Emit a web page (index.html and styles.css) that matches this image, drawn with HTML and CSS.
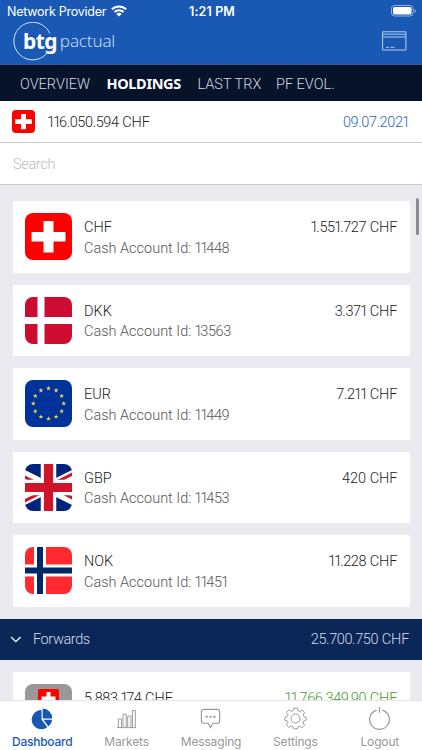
FILE: index.html
```html
<!DOCTYPE html>
<html lang="en">
<head>
<meta charset="utf-8">
<title>Holdings</title>
<link rel="stylesheet" href="styles.css">
</head>
<body>
<svg width="0" height="0" class="defs">
  <defs>
    <clipPath id="round"><rect width="47" height="47" rx="8"/></clipPath>
    <path id="star" fill="#f2d14b" d="M0-2.500 .65-.8 2.400-.78 1 .32 1.500 2 0 1-1.500 2-1 .32-2.400-.78-.65-.8Z"/>
    <symbol id="swiss" viewBox="0 0 47 47"><rect width="47" height="47" rx="8" fill="#f00"/><path fill="#fff" d="M18.500 8h10v11h12v9.500h-12v11h-10v-11h-12v-9.500h12z"/></symbol>
  </defs>
</svg>
<div class="app">
  <header class="header">
    <div class="status">
      <div class="carrier"><span class="carrier-name">Network Provider</span>
        <svg width="16" height="12" viewBox="0 0 16 12" fill="none" stroke="#fff" stroke-width="2.100"><path d="M.9 4.300a10.300 10.300 0 0 1 14.200 0M3.400 7.100a6.600 6.600 0 0 1 9.200 0"/><path fill="#fff" stroke="none" d="M5.300 8.900a4 4 0 0 1 5.400 0L8 11.600z"/></svg>
      </div>
      <span class="clock">1:21 PM</span>
      <svg class="battery" width="26" height="12" viewBox="0 0 26 12"><rect x=".5" y=".5" width="21.500" height="10.500" rx="3" fill="none" stroke="#91b1df"/><rect x="2" y="2" width="18.500" height="7.500" rx="1.600" fill="#fff"/><path d="M23.500 4v4q1.300-.6 1.300-2t-1.300-2" fill="#91b1df"/></svg>
    </div>
    <div class="brand">
      <div class="logo">
        <svg class="ring" width="40" height="39" viewBox="0 0 40 39" fill="none" stroke="#d5e2f5" stroke-width="1"><path d="M37.900 11.500A18.800 18.800 0 1 0 36 30"/></svg>
        <span class="logo-bold">btg</span><span class="logo-thin">pactual</span>
      </div>
      <svg class="card-icon" width="25" height="20" viewBox="0 0 25 20" fill="none" stroke="#b9cdea"><path d="M.6.8h23.300v18.200H.600zM.600 3.200h23.300M.600 6h23.300M4 16.300h3M8.500 16.300h4"/></svg>
    </div>
  </header>
  <nav class="nav"><span class="n1">OVERVIEW</span><b class="n2">HOLDINGS</b><span class="n3">LAST TRX</span><span class="n4">PF EVOL.</span></nav>
  <div class="summary"><svg width="23" height="23"><use href="#swiss"/></svg><span class="total"><span class="num"><i>11</i>6.050.594</span> CHF</span><span class="date num">09.07.202<i>1</i></span></div>
  <div class="search">Search</div>
  <main class="list">
    <div class="scrollbar"></div>
    <article class="card"><svg class="flag" viewBox="0 0 47 47"><use href="#swiss"/></svg>
      <div class="info"><div class="line"><span>CHF</span><span><span class="num"><i>1</i>.55<i>1</i>.727</span> CHF</span></div><div class="sub">Cash Account Id: <span class="num"><i>11</i>448</span></div></div></article>
    <article class="card"><svg class="flag" viewBox="0 0 47 47"><g clip-path="url(#round)"><path fill="#cd0c32" d="M0 0h47v47H0z"/><path stroke="#fff" stroke-width="7" d="M16 0v47M0 23.500h47"/></g></svg>
      <div class="info"><div class="line"><span>DKK</span><span><span class="num">3.37<i>1</i></span> CHF</span></div><div class="sub">Cash Account Id: <span class="num"><i>1</i>3563</span></div></div></article>
    <article class="card"><svg class="flag" viewBox="0 0 47 47"><rect width="47" height="47" rx="8" fill="#039"/><use href="#star" x="23.500" y="8.400"/><use href="#star" x="31.100" y="10.400"/><use href="#star" x="36.700" y="16"/><use href="#star" x="38.700" y="23.600"/><use href="#star" x="36.700" y="31.200"/><use href="#star" x="31.100" y="36.800"/><use href="#star" x="23.500" y="38.800"/><use href="#star" x="15.900" y="36.800"/><use href="#star" x="10.300" y="31.200"/><use href="#star" x="8.300" y="23.600"/><use href="#star" x="10.300" y="16"/><use href="#star" x="15.900" y="10.400"/></svg>
      <div class="info"><div class="line"><span>EUR</span><span><span class="num">7.2<i>11</i></span> CHF</span></div><div class="sub">Cash Account Id: <span class="num"><i>11</i>449</span></div></div></article>
    <article class="card"><svg class="flag" viewBox="0 0 47 47"><g clip-path="url(#round)"><path fill="#00247d" d="M0 0h47v47H0z"/><path stroke="#fff" stroke-width="10.500" d="M-23.500 0l94 47M70.500 0l-94 47"/><path stroke="#cf142b" stroke-width="3" d="M23.500 25l-47-23.500M23.500 22l47-23.500M23.500 25l-47 23.500M23.500 22l47 23.500"/><path stroke="#fff" stroke-width="15.500" d="M23.500 0v47M0 23.500h47"/><path stroke="#cf142b" stroke-width="9.200" d="M23.500 0v47M0 23.500h47"/></g></svg>
      <div class="info"><div class="line"><span>GBP</span><span>420 CHF</span></div><div class="sub">Cash Account Id: <span class="num"><i>11</i>453</span></div></div></article>
    <article class="card"><svg class="flag" viewBox="0 0 47 47"><g clip-path="url(#round)"><path fill="#ff2a2f" d="M0 0h47v47H0z"/><path stroke="#fff" stroke-width="12" d="M15 0v47M0 23.500h47"/><path stroke="#002868" stroke-width="6" d="M15 0v47M0 23.500h47"/></g></svg>
      <div class="info"><div class="line"><span>NOK</span><span><span class="num"><i>11</i>.228</span> CHF</span></div><div class="sub">Cash Account Id: <span class="num"><i>11</i>45<i>1</i></span></div></div></article>
    <section class="group"><svg width="12" height="8" viewBox="0 0 12 8" fill="none" stroke="#fff" stroke-width="1.300"><path d="M1 1l4.800 4.700L10.600 1"/></svg><span class="group-name">Forwards</span><span class="group-total"><span class="num">25.700.750</span> CHF</span></section>
    <article class="card"><svg class="flag" viewBox="0 0 47 47"><rect width="47" height="47" rx="8" fill="#999"/><rect x="13" y="5" width="21" height="21" rx="1.500" fill="#f00"/><path stroke="#fff" stroke-width="4" d="M23.500 8v14M16.500 14.500h14"/></svg>
      <div class="info"><div class="line"><span><span class="num">5.883.<i>1</i>74</span> CHF</span><span class="gain"><span class="num"><i>11</i>.766.349,90</span> CHF</span></div></div></article>
  </main>
  <footer class="tabs">
    <div class="tab active"><svg viewBox="0 0 24 24"><path fill="#1a57b3" d="M11 3.200v9.800l6 8A10 10 0 1 1 11 3.200z"/><path fill="#1a57b3" d="M12.200 1.500v10.400h10A10.300 10.300 0 0 0 12.200 1.500zM13 13.200h9a10 10 0 0 1-4 7z"/></svg><span>Dashboard</span></div>
    <div class="tab"><svg viewBox="0 0 24 24"><path d="M2 21.500h20M3.500 21.500v-9h3.300v9M8.400 21.500v-14h3.300v14M13.300 21.500v-12h3.300v12M18.200 21.500V3.700h3v17.800"/></svg><span>Markets</span></div>
    <div class="tab"><svg viewBox="0 0 24 24"><path d="M5 2.500h14q2.500 0 2.500 2.500v9.500q0 2.500-2.500 2.500h-4.500L12 21.500 9.500 17H5q-2.500 0-2.500-2.500V5Q2.500 2.500 5 2.500z" stroke-width="1.200"/><path d="M6.800 10.200h2.200M10.900 10.200h2.200M15 10.200h2.200" stroke-width="2.200"/></svg><span>Messaging</span></div>
    <div class="tab"><svg viewBox="0 0 24 24"><circle cx="12" cy="12" r="4.700"/><path stroke-linejoin="round" d="M10 1.200h4l.6 2.700 2 .8 2.400-1.600 2.600 2.700-1.500 2.500.8 1.900 2.200.6v3l-2.400.8-.8 2 1.600 2.400-2.800 2.600-2.300-1.600-1.800.8-.6 2H10l-.6-2.200-1.900-.8-2.400 1.600-2.700-2.600 1.600-2.400-.8-2-2.300-.6v-3l2.400-.7.8-1.900-1.600-2.400 2.700-2.700 2.400 1.600 1.800-.8z"/></svg><span>Settings</span></div>
    <div class="tab"><svg viewBox="0 0 24 24"><path stroke-width="1.300" d="M9 3.200a10.300 10.300 0 1 0 6 0M12 0v6"/></svg><span>Logout</span></div>
  </footer>
</div>
</body>
</html>
```
FILE: styles.css
```css
* { box-sizing: border-box; }
body { margin: 0; font-family: Roboto, "Liberation Sans", sans-serif; font-weight: 300; color: #222; }
.defs { position: absolute; }
.app { width: 422px; height: 750px; display: flex; flex-direction: column; overflow: hidden; background: #ebeaf0; }
.header { height: 65px; flex: none; background: #1959b3; color: #fff; border-bottom: 1px solid #35598f; }
.status { height: 22px; display: grid; grid-template-columns: 1fr auto 1fr; align-items: center; padding: 0 5px 0 7px; font-family: Inter, sans-serif; font-size: 12.5px; font-weight: 400; }
.carrier { display: flex; align-items: center; gap: 5px; }
.carrier-name { letter-spacing: -.25px; width: 99px; white-space: nowrap; }
.clock { font-weight: 600; letter-spacing: .12px; }
.battery { justify-self: end; }
.brand { height: 40px; display: flex; justify-content: space-between; padding: 0 15px 0 12px; }
.logo { display: flex; align-items: flex-start; position: relative; padding-left: 11px; }
.ring { position: absolute; left: 0; top: 0; }
.logo-bold { font: 700 21px/38px "Noto Sans", sans-serif; letter-spacing: -.6px; }
.logo-thin { font: 300 17px/38px "Noto Sans", sans-serif; margin-left: 3px; color: #c9daf2; letter-spacing: -.15px; }
.card-icon { margin-top: 9px; }
.nav { height: 36px; flex: none; display: flex; align-items: baseline; padding: 0 0 0 20px; line-height: 39px; background: #06132b; color: #d4d9e3; font-size: 14.500px; white-space: nowrap; }
.n1 { width: 86.500px; }
.n2 { width: 91px; color: #fff; font-family: "Noto Sans", sans-serif; font-weight: 700; letter-spacing: -.35px; line-height: 30px; }
.n3 { width: 78.500px; }
.num { letter-spacing: -.4px; }
.num i { font-style: normal; letter-spacing: -2px; margin-left: -.6px; }
.summary { height: 41.500px; flex: none; display: flex; align-items: center; padding: 0 14px 0 12px; background: #fff; border-bottom: 1px solid #cbcbcf; font-size: 14.500px; }
.total, .date { padding-top: 2px; }
.total { margin-left: 12.500px; }
.date { margin-left: auto; color: #2a66bd; }
.search { height: 42px; flex: none; padding-left: 13px; background: #fff; border-bottom: 1px solid #cbcbcf; font-size: 14.500px; line-height: 43px; letter-spacing: -.3px; color: #bbb; }
.list { flex: 1; min-height: 0; overflow: hidden; position: relative; padding-top: 16.500px; }
.scrollbar { position: absolute; right: 3px; top: 13px; width: 3px; height: 37px; border-radius: 2px; background: #8c8b91; }
.card { height: 71.500px; margin: 0 12.500px 12px; padding: 12px; background: #fff; display: flex; }
.flag { width: 47px; height: 47px; flex: none; }
.info { flex: 1; margin-left: 12.500px; padding-top: 5px; font-size: 14.500px; line-height: 20.500px; }
.line { display: flex; justify-content: space-between; }
.sub { color: #555; }
.group { height: 41px; margin-bottom: 12px; display: flex; align-items: center; padding: 1px 12.500px 0 10px; background: #0b2757; color: #d3dcea; font-size: 14.500px; }
.group-name { margin-left: 11px; letter-spacing: -.4px; }
.group-total { margin-left: auto; }
.gain { color: #4b972c; }
.tabs { height: 50.500px; flex: none; display: grid; grid-template-columns: repeat(5, 1fr); background: #fff; border-top: 1px solid #e4e4e8; }
.tab { display: flex; flex-direction: column; align-items: center; font: 400 12px/16px Inter, sans-serif; color: #999; padding-top: 6px; letter-spacing: -.15px; }
.tab svg { width: 23px; height: 23px; fill: none; stroke: #999; stroke-width: 1; margin-bottom: 4px; }
.tab.active { color: #1a57b3; font-weight: 500; letter-spacing: -.25px; }
.tab.active svg { stroke: none; }
```
